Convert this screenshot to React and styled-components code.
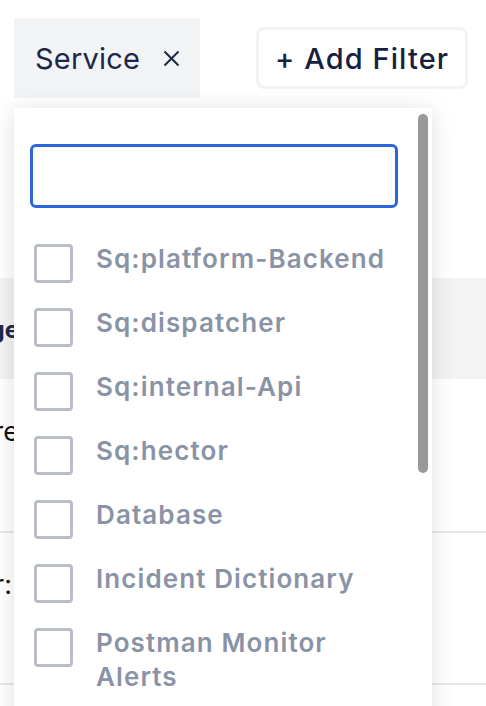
import React from 'react';
import styled, { createGlobalStyle } from 'styled-components';

const GlobalStyle = createGlobalStyle`
  html, body {
    margin: 0;
    padding: 0;
    height: 706px;
    overflow: hidden;
    background: #ffffff;
    font-family: Inter, "Noto Sans", "Liberation Sans", sans-serif;
  }
`;

const SERVICES = [
  'Sq:platform-Backend',
  'Sq:dispatcher',
  'Sq:internal-Api',
  'Sq:hector',
  'Database',
  'Incident Dictionary',
  'Postman Monitor Alerts',
];

// 页面容器
const Page = styled.div`
  position: relative;
  width: 486px;
  height: 706px;
  overflow: hidden;
`;

// 顶部筛选栏
const FilterBar = styled.div`
  display: flex;
  align-items: center;
  gap: 56px;
  padding: 18px 0 0 14px;
`;

const Chip = styled.div`
  display: flex;
  align-items: center;
  gap: 23px;
  height: 80px;
  width: 186px;
  box-sizing: border-box;
  padding-left: 21px;
  background: #f2f3f5;
  color: #1d2849;
  font-size: 29px;
  font-weight: 400;
  letter-spacing: 0.2px;
`;

const ChipClose = styled.span`
  display: flex;
  align-items: center;
`;

const AddButton = styled.button`
  height: 62px;
  width: 212px;
  box-sizing: border-box;
  background: #ffffff;
  border: 3px solid #f3f3f4;
  border-radius: 8px;
  color: #16213f;
  font-family: inherit;
  font-size: 29px;
  font-weight: 500;
  letter-spacing: 1.1px;
  padding: 0;
`;

// 背景表格
const Table = styled.div`
  margin-top: 180px;
  display: flex;
  flex-direction: column;
`;

const Row = styled.div`
  height: ${(p) => p.height}px;
  box-sizing: border-box;
  background: ${(p) => (p.header ? '#f3f3f3' : '#ffffff')};
  border-bottom: ${(p) => (p.header ? 'none' : '2px solid #e6e8ec')};
  padding-top: ${(p) => p.top}px;
`;

const Cell = styled.div`
  width: ${(p) => p.end}px;
  display: flex;
  justify-content: flex-end;
  overflow: hidden;
  white-space: nowrap;
  font-size: ${(p) => (p.header ? 24 : 27)}px;
  font-weight: ${(p) => (p.header ? 700 : 400)};
  color: ${(p) => (p.header ? '#1d2849' : '#111111')};
  line-height: 34px;
`;

// 下拉面板
const Dropdown = styled.div`
  position: absolute;
  top: 108px;
  left: 14px;
  width: 418px;
  height: 640px;
  box-sizing: border-box;
  background: #ffffff;
  border-radius: 4px;
  box-shadow: 0 2px 22px rgba(0, 0, 0, 0.13);
  padding: 36px 30px 0 16px;
  overflow: hidden;
`;

const SearchInput = styled.input`
  display: block;
  width: 368px;
  height: 64px;
  box-sizing: border-box;
  border: 3px solid #2d66d8;
  border-radius: 6px;
  outline: none;
  font-family: inherit;
  font-size: 24px;
  padding: 0 14px;
`;

const OptionList = styled.div`
  display: flex;
  flex-direction: column;
  gap: 25px;
  margin-top: 36px;
  padding-left: 4px;
`;

const Option = styled.label`
  display: flex;
  align-items: flex-start;
  gap: 23px;
`;

const Box = styled.span`
  flex: none;
  width: 39px;
  height: 39px;
  box-sizing: border-box;
  border: 3px solid #b9bdc8;
  border-radius: 4px;
`;

const OptionText = styled.span`
  margin-top: -2px;
  font-size: 26px;
  font-weight: 600;
  line-height: 34px;
  letter-spacing: 1.1px;
  color: #8a93a6;
  max-width: 300px;
`;

const Thumb = styled.div`
  position: absolute;
  top: 6px;
  right: 4px;
  width: 10px;
  height: 359px;
  border-radius: 5px;
  background: #999999;
`;

export default function App() {
  return (
    <Page>
      <GlobalStyle />
      <FilterBar>
        <Chip>
          Service
          <ChipClose>
            <svg width="17" height="17" viewBox="0 0 17 17">
              <path d="M1.5 1.5 L15.5 15.5 M15.5 1.5 L1.5 15.5" stroke="#1d2849" strokeWidth="2" />
            </svg>
          </ChipClose>
        </Chip>
        <AddButton>+ Add Filter</AddButton>
      </FilterBar>

      <Table>
        <Row header height={101} top={35}>
          <Cell header end={19}>Stage</Cell>
        </Row>
        <Row height={154} top={36}>
          <Cell end={19}>Feature</Cell>
        </Row>
        <Row height={152} top={35}>
          <Cell end={12}>Owner:</Cell>
        </Row>
      </Table>

      <Dropdown>
        <SearchInput />
        <OptionList>
          {SERVICES.map((name) => (
            <Option key={name}>
              <Box />
              <OptionText>{name}</OptionText>
            </Option>
          ))}
        </OptionList>
        <Thumb />
      </Dropdown>
    </Page>
  );
}
